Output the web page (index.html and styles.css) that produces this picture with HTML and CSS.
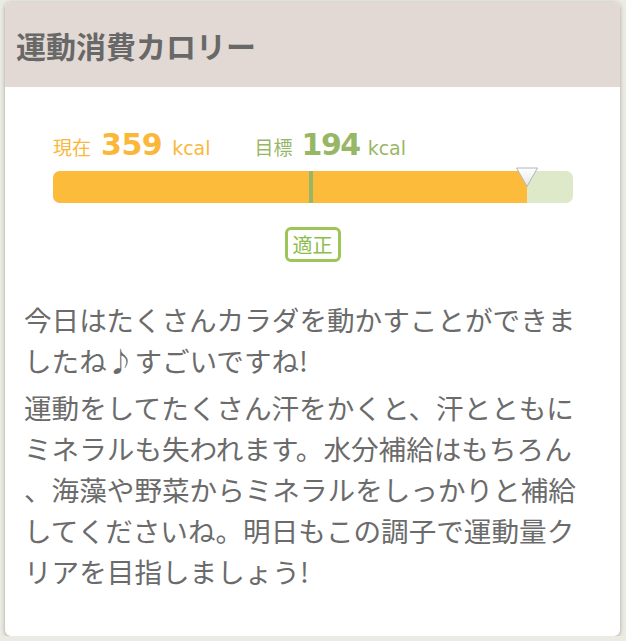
FILE: index.html
```html
<!DOCTYPE html>
<html lang="ja">
<head>
<meta charset="utf-8">
<title>運動消費カロリー</title>
<link rel="stylesheet" href="styles.css">
</head>
<body>
<div class="card">
  <div class="card-header">
    <h1 class="title">運動消費カロリー</h1>
  </div>
  <div class="card-body">
    <div class="stats">
      <span class="label current">現在</span>
      <span class="num current">359</span>
      <span class="unit current">kcal</span>
      <span class="label goal gap">目標</span>
      <span class="num goal tight">194</span>
      <span class="unit goal">kcal</span>
    </div>
    <div class="bar">
      <div class="bar-fill" style="width: 91.2%"></div>
      <div class="bar-goal" style="left: 49.2%"></div>
      <svg class="bar-marker" style="left: 91.2%" width="24" height="21" viewBox="0 0 24 21">
        <defs>
          <linearGradient id="mg" x1="0" y1="0" x2="0" y2="1">
            <stop offset="0" stop-color="#ffffff"/>
            <stop offset="1" stop-color="#e6e6e6"/>
          </linearGradient>
        </defs>
        <polygon points="1.5,1 22.5,1 12,19.5" fill="url(#mg)" stroke="#b4b4b4" stroke-width="1" stroke-linejoin="round"/>
      </svg>
    </div>
    <div class="badge-row">
      <span class="badge">適正</span>
    </div>
    <p class="message">今日はたくさんカラダを動かすことができま<br>したね♪すごいですね!</p>
    <p class="message second">運動をしてたくさん汗をかくと、汗とともに<br>ミネラルも失われます。水分補給はもちろん<br>、海藻や野菜からミネラルをしっかりと補給<br>してくださいね。明日もこの調子で運動量ク<br>リアを目指しましょう!</p>
  </div>
</div>
</body>
</html>
```

FILE: styles.css
```css
html, body {
  margin: 0;
  padding: 0;
}
body {
  background: #ecebe3;
  padding: 2px 6px 0 5px;
  font-family: "Noto Sans CJK JP", "Noto Sans", sans-serif;
}
.card {
  height: 634px;
  background: #ffffff;
  border-radius: 6px;
  box-shadow: 0 1px 4px rgba(0, 0, 0, 0.32);
  overflow: hidden;
}
.card-header {
  height: 85px;
  background: #e3d9d4;
  display: flex;
  align-items: center;
  padding-left: 11px;
}
.title {
  margin: 0;
  font-size: 30px;
  font-weight: 700;
  color: #686868;
  line-height: 1;
}
.card-body {
  padding-top: 41px;
}
.stats {
  height: 33px;
  display: flex;
  align-items: baseline;
  padding-left: 48px;
  line-height: 33px;
}
.label {
  font-size: 19px;
  margin-right: 10px;
}
.label.gap {
  margin-left: 44px;
}
.num {
  font-family: "DejaVu Sans", sans-serif;
  font-weight: 700;
  font-size: 30px;
  letter-spacing: -0.5px;
  margin-right: 10px;
}
.num.tight {
  letter-spacing: -1.5px;
  margin-left: -1px;
  margin-right: 8px;
}
.unit {
  font-family: "DejaVu Sans", sans-serif;
  font-size: 19px;
}
.current { color: #fbb73a; }
.goal { color: #98b766; }
.bar {
  position: relative;
  margin: 10px 47px 0 48px;
  height: 32px;
  border-radius: 7px;
  background: #dde9c9;
}
.bar-fill {
  height: 100%;
  background: #fdbb3c;
  border-radius: 7px 0 0 7px;
}
.bar-goal {
  position: absolute;
  top: 0;
  width: 4px;
  height: 100%;
  background: #98b766;
}
.bar-marker {
  position: absolute;
  top: -4px;
  transform: translateX(-50%);
}
.badge-row {
  display: flex;
  justify-content: center;
  margin-top: 24px;
}
.badge {
  display: inline-block;
  border: 3px solid #9ec557;
  border-radius: 6px;
  padding: 0 5px;
  font-size: 20px;
  line-height: 29px;
  color: #8dbd4c;
}
.message {
  margin: 37px 0 0 19px;
  font-size: 27.6px;
  line-height: 41px;
  color: #6b6b6b;
  white-space: nowrap;
}
.message.second {
  margin-top: 6px;
}
```
